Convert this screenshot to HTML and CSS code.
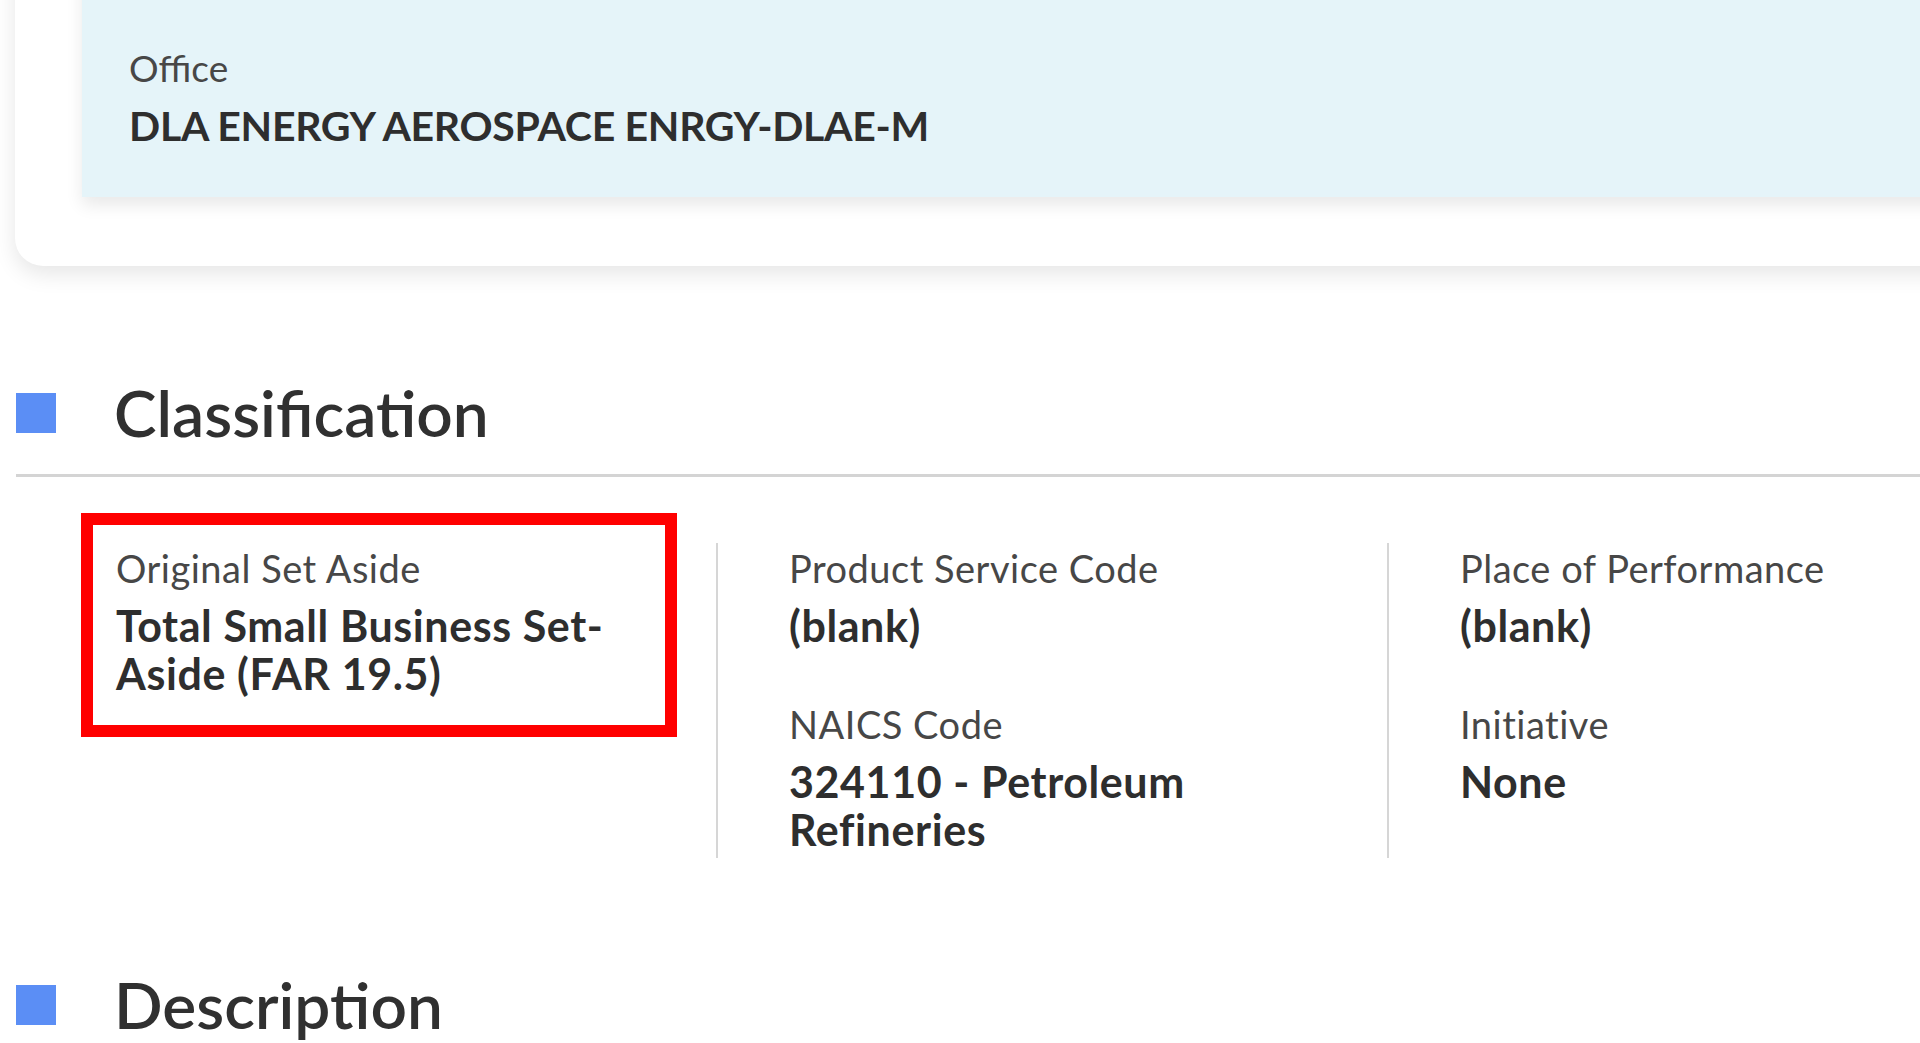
FILE: index.html
```html
<!DOCTYPE html>
<html lang="en">
<head>
<meta charset="utf-8">
<title>Opportunity - Classification</title>
<link rel="stylesheet" href="styles.css">
</head>
<body>
<div class="page">
  <div class="card">
    <div class="office-box">
      <div class="label label-office">Office</div>
      <div class="value value-office">DLA ENERGY AEROSPACE ENRGY-DLAE-M</div>
    </div>
  </div>

  <section class="section">
    <div class="section-head">
      <span class="marker"></span>
      <h2 class="section-title">Classification</h2>
    </div>
    <div class="fields">
      <div class="col col-first">
        <div class="field highlight">
          <div class="label">Original Set Aside</div>
          <div class="value">Total Small Business Set-Aside (FAR 19.5)</div>
        </div>
      </div>
      <div class="col">
        <div class="field">
          <div class="label">Product Service Code</div>
          <div class="value">(blank)</div>
        </div>
        <div class="field">
          <div class="label">NAICS Code</div>
          <div class="value">324110 - Petroleum Refineries</div>
        </div>
      </div>
      <div class="col">
        <div class="field">
          <div class="label">Place of Performance</div>
          <div class="value">(blank)</div>
        </div>
        <div class="field">
          <div class="label">Initiative</div>
          <div class="value">None</div>
        </div>
      </div>
    </div>
  </section>

  <section class="section section-desc">
    <div class="section-head">
      <span class="marker"></span>
      <h2 class="section-title">Description</h2>
    </div>
  </section>
</div>
</body>
</html>
```

FILE: styles.css
```css
html, body {
  margin: 0;
  padding: 0;
  background: #ffffff;
  overflow: hidden;
}

body {
  font-family: Lato, "Liberation Sans", sans-serif;
  color: #2b2b2b;
  width: 1920px;
  height: 1043px;
}

.page {
  display: flex;
  flex-direction: column;
}

/* top card */
.card {
  margin: -60px -60px 0 15px;
  padding: 0 0 69px 67px;
  background: #ffffff;
  border-radius: 28px;
  box-shadow: 0 8px 22px rgba(0, 0, 0, 0.10);
}

.office-box {
  background: #e5f4f9;
  padding: 106px 0 47px 47px;
  box-shadow: 0 8px 16px rgba(0, 0, 0, 0.09);
}

.label {
  font-size: 38px;
  line-height: 44px;
  letter-spacing: 0.5px;
  color: #474747;
  font-weight: 400;
}

.value {
  font-size: 43px;
  line-height: 48px;
  letter-spacing: 0.6px;
  font-weight: 700;
  color: #2e2e2e;
  margin-top: 12px;
}

.label-office {
  font-size: 37px;
  letter-spacing: 0;
}

.value-office {
  font-size: 41px;
  letter-spacing: -0.3px;
}

/* sections */
.section {
  margin-left: 16px;
  margin-top: 117px;
}

.section-desc {
  margin-top: 117px;
}

.section-head {
  display: flex;
  align-items: center;
  gap: 58px;
  padding-bottom: 31px;
  border-bottom: 3px solid #d4d4d4;
}

.section-desc .section-head {
  border-bottom: none;
}

.marker {
  width: 40px;
  height: 40px;
  background: #5b8ef5;
  flex: none;
}

.section-title {
  margin: 0;
  font-size: 64px;
  line-height: 60px;
  font-weight: 600;
  color: #303030;
}

.fields {
  display: grid;
  grid-template-columns: 700px 671px 671px;
  margin-top: 66px;
}

.col {
  border-left: 2px solid #d6d6d6;
  padding: 3px 120px 4px 71px;
  display: flex;
  flex-direction: column;
  gap: 52px;
}

.col-first {
  border-left: none;
  padding: 3px 0 0 100px;
}

.field.highlight {
  width: 526px;
  margin-left: -2px;
  padding: 0 2px 6px 2px;
  outline: 12px solid #ff0000;
  outline-offset: 21px;
}
```
